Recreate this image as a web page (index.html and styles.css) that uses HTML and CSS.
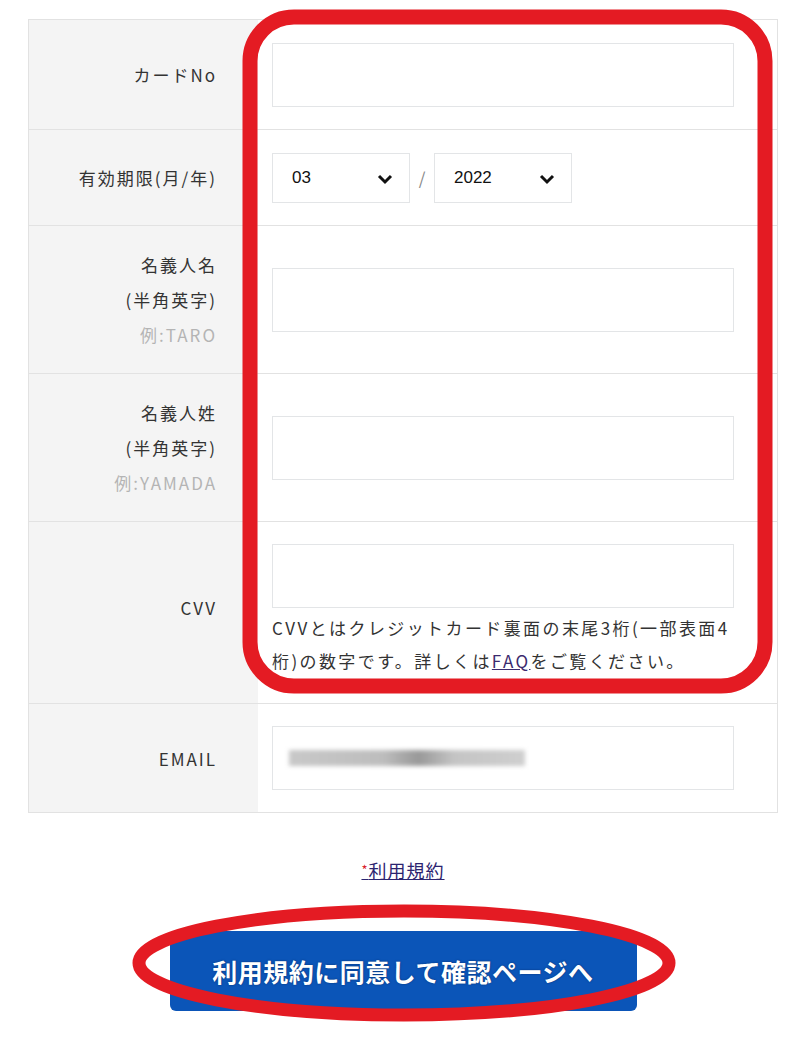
FILE: index.html
```html
<!DOCTYPE html>
<html lang="ja">
<head>
    <meta charset="UTF-8">
    <title>カード情報入力</title>
    <link rel="stylesheet" href="styles.css">
</head>
<body>
    <div class="page">
        <div class="form">
            <div class="row row-card">
                <div class="label">カードNo</div>
                <div class="field"><input class="text" type="text"></div>
            </div>
            <div class="row row-exp">
                <div class="label">有効期限(月/年)</div>
                <div class="field">
                    <div class="sel">
                        <select><option>03</option></select>
                        <svg class="chev" width="16" height="12" viewBox="0 0 16 12"><path d="M2 3l6 6 6-6" fill="none" stroke="#111" stroke-width="3"/></svg>
                    </div>
                    <span class="slash">/</span>
                    <div class="sel">
                        <select><option>2022</option></select>
                        <svg class="chev" width="16" height="12" viewBox="0 0 16 12"><path d="M2 3l6 6 6-6" fill="none" stroke="#111" stroke-width="3"/></svg>
                    </div>
                </div>
            </div>
            <div class="row row-name">
                <div class="label">名義人名<br>(半角英字)<br><span class="eg">例:TARO</span></div>
                <div class="field"><input class="text" type="text"></div>
            </div>
            <div class="row row-name">
                <div class="label">名義人姓<br>(半角英字)<br><span class="eg">例:YAMADA</span></div>
                <div class="field"><input class="text" type="text"></div>
            </div>
            <div class="row row-cvv">
                <div class="label">CVV</div>
                <div class="field col">
                    <input class="text" type="text">
                    <p class="note">CVVとはクレジットカード裏面の末尾3桁(一部表面4桁)の数字です。詳しくは<a href="#">FAQ</a>をご覧ください。</p>
                </div>
            </div>
            <div class="row row-mail">
                <div class="label">EMAIL</div>
                <div class="field">
                    <div class="text mail"><span class="blur"></span></div>
                </div>
            </div>
        </div>

        <div class="terms"><a href="#"><span class="ast">*</span>利用規約</a></div>
        <div class="submit">
            <button class="btn">利用規約に同意して確認ページへ</button>
        </div>

        <!-- red annotation marks -->
        <svg class="marks" width="800" height="1038" viewBox="0 0 800 1038">
            <rect x="250" y="17" width="515" height="669" rx="44" fill="none" stroke="#e41b23" stroke-width="15"/>
            <ellipse cx="404" cy="963" rx="265" ry="52" fill="none" stroke="#e41b23" stroke-width="13"/>
        </svg>
    </div>
</body>
</html>
```

FILE: styles.css
```css
* {
    margin: 0;
    padding: 0;
    box-sizing: border-box;
}

body {
    font-family: "Noto Sans CJK JP", "Noto Sans", sans-serif;
    color: #333;
    background: #fff;
}

.page {
    position: relative;
    width: 800px;
    height: 1038px;
    padding: 19px 22px 0 28px;
}

.form {
    border: 1px solid #e2e2e2;
    width: 750px;
}

.row {
    display: grid;
    grid-template-columns: 229px 1fr;
    border-top: 1px solid #e2e2e2;
}

.row:first-child {
    border-top: none;
}

.label {
    background: #f4f4f4;
    text-align: right;
    padding-right: 41px;
    font-size: 17px;
    letter-spacing: 2px;
    line-height: 35px;
    display: flex;
    flex-direction: column;
    justify-content: center;
    align-items: flex-end;
}

.label .eg {
    color: #b4b4b4;
}

.field {
    display: flex;
    align-items: center;
    padding: 22px 43px 22px 14px;
}

.field.col {
    flex-direction: column;
    align-items: stretch;
    padding-bottom: 26px;
}

.text {
    width: 462px;
    height: 64px;
    border: 1px solid #e3e5e7;
    background: #fff;
    outline: none;
}

.row-card {
    height: 109px;
}

.row-exp {
    height: 96px;
}

.row-name {
    height: 148px;
}

.row-cvv {
    height: 182px;
}

.row-cvv .label {
    padding-bottom: 10px;
}

.row-mail {
    height: 109px;
}

.sel {
    position: relative;
    width: 138px;
    height: 50px;
}

.sel select {
    appearance: none;
    -webkit-appearance: none;
    width: 100%;
    height: 100%;
    border: 1px solid #e3e5e7;
    background: #fff;
    font-family: "Liberation Sans", Arial, sans-serif;
    font-size: 17px;
    color: #111;
    padding-left: 19px;
    outline: none;
}

.sel .chev {
    position: absolute;
    right: 17px;
    top: 20px;
    pointer-events: none;
}

.slash {
    width: 24px;
    text-align: center;
    color: #888;
    font-size: 17px;
}

.note {
    font-size: 17px;
    line-height: 33px;
    margin-top: 3px;
    letter-spacing: 2.4px;
    color: #333;
}

.note a {
    color: #3b2a6e;
}

.mail {
    display: flex;
    align-items: center;
    padding-left: 16px;
}

.blur {
    display: block;
    width: 236px;
    height: 16px;
    background: linear-gradient(90deg, #c8c8c8, #bdbdbd 40%, #999 55%, #c4c4c4 70%, #cfcfcf);
    filter: blur(2px);
}

.terms {
    text-align: center;
    margin-top: 44px;
    font-size: 18px;
    letter-spacing: 1px;
}

.terms a {
    color: #2c2470;
}

.terms .ast {
    color: #d9232a;
    font-size: 13px;
    vertical-align: 3px;
}

.submit {
    display: flex;
    justify-content: center;
    margin-top: 48px;
}

.btn {
    width: 467px;
    height: 80px;
    border: none;
    border-radius: 6px;
    background: #0b55b8;
    color: #fff;
    font-family: "Noto Sans CJK JP", sans-serif;
    font-weight: bold;
    font-size: 25px;
    letter-spacing: 0.5px;
    text-shadow: 0 0 2px rgba(0, 20, 60, 0.6);
}

.marks {
    position: absolute;
    left: 0;
    top: 0;
    pointer-events: none;
}
```
